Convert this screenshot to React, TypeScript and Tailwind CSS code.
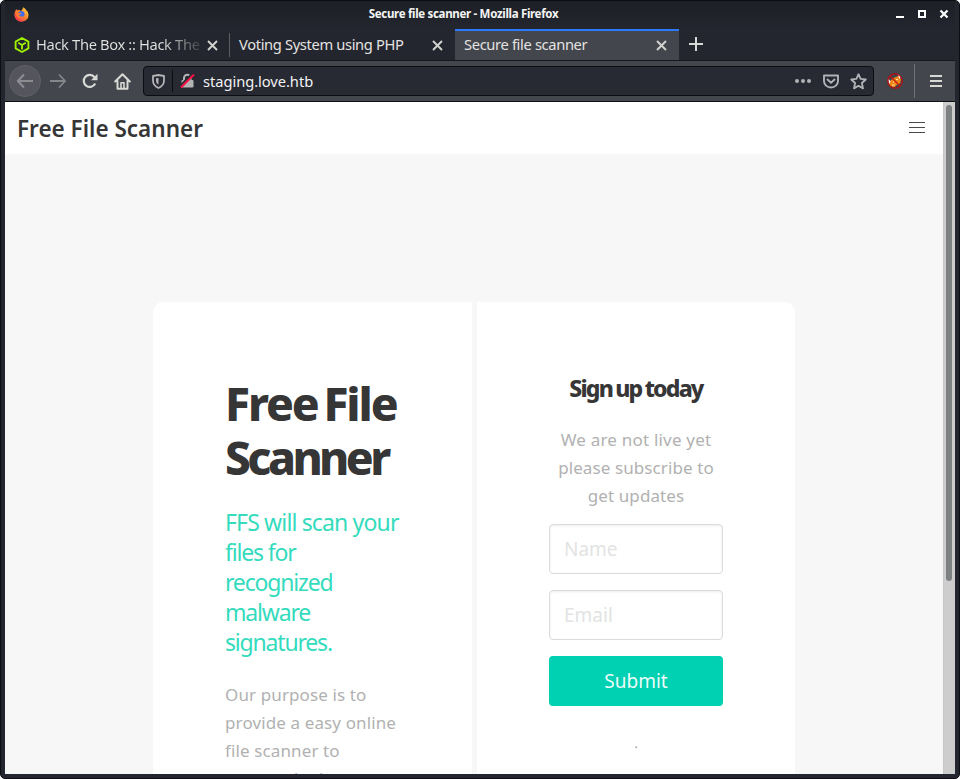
import type { ReactNode } from "react";

function FirefoxLogo() {
  return (
    <svg width="15" height="15" viewBox="0 0 16 16">
      <defs>
        <linearGradient id="fx" x1="1" y1="0" x2="0.2" y2="1">
          <stop offset="0" stopColor="#ffe14a" />
          <stop offset="0.5" stopColor="#ff8a2b" />
          <stop offset="1" stopColor="#f02f55" />
        </linearGradient>
      </defs>
      <path d="M1 5 2.4 2.2l1 1.5L5.4 3l1.8 1.2L9 2.6 9.6.3c2 1 3 2 3.600 3.400l1.300 1C16 8 15.800 11 13.600 13.400 10.500 16.500 5.500 16.300 2.500 13.500.2 11 0 8 1 5Z" fill="url(#fx)" />
      <circle cx="7.700" cy="7.800" r="3.500" fill="#3c6df0" />
      <path d="M2 5c2 2 3 1 5 1l1 1.200-2.500 1.300c.5 2 3.500 2.200 5 .5-.5 3-5 4-7 1.500C2.300 9 1.800 7 2 5Z" fill="#ff7a30" />
    </svg>
  );
}

function BoxLogo() {
  return (
    <svg width="16" height="16" viewBox="0 0 16 16" fill="none" stroke="#9fef00" strokeWidth="1.900" strokeLinejoin="round">
      <path d="M8 1 14.400 4.600v6.800L8 15 1.600 11.400V4.600ZM4.200 5.800 8 8l3.800-2.200M8 8v4.500" />
    </svg>
  );
}

function CloseIcon() {
  return (
    <svg width="11" height="11" viewBox="0 0 11 11" stroke="#d3d3ce" strokeWidth="1.900" className="shrink-0">
      <path d="M1 1l9 9M10 1l-9 9" />
    </svg>
  );
}

function Tab({ children, icon, active = false, fade = false }: { children: ReactNode; icon?: ReactNode; active?: boolean; fade?: boolean }) {
  return (
    <div
      className={
        active
          ? "flex h-8 w-[224px] items-center border-t-2 border-[#2a7afa] bg-[#43464d] pr-[12px] pb-[2px] pl-[9px]"
          : "flex h-8 w-[225px] items-center pr-[12px] pl-[9px]"
      }
    >
      {icon && <span className="mr-[6px] shrink-0">{icon}</span>}
      <span
        className={
          fade
            ? "flex-1 bg-linear-to-r from-[#e3e3e1] from-75% to-[#e3e3e1]/10 bg-clip-text pb-px tracking-[-0.350px] whitespace-nowrap text-transparent"
            : "flex-1 pb-px tracking-[-0.350px] whitespace-nowrap"
        }
      >
        {children}
      </span>
      <span className={fade ? "ml-[4px]" : ""}>
        <CloseIcon />
      </span>
    </div>
  );
}

function TitleBar() {
  return (
    <div className="flex h-[28px] shrink-0 items-center bg-linear-to-b from-[#1d1f26] to-[#23262e] pr-[6px] pb-[2px] pl-[9px]">
      <div className="w-[54px]">
        <FirefoxLogo />
      </div>
      <div className="flex-1 pr-[36px] text-center text-[11.5px] font-bold tracking-[-0.310px] text-[#f4f4f4]">
        Secure file scanner - Mozilla Firefox
      </div>
      <svg width="54" height="10" viewBox="0 0 54 10" fill="none" stroke="#fff">
        <path d="M1 8h8" strokeWidth="2" />
        <rect x="24" y="2" width="6" height="6" strokeWidth="2" />
        <path d="M45.500 1.500l7 7M52.500 1.500l-7 7" strokeWidth="2.200" />
      </svg>
    </div>
  );
}

function Toolbar() {
  return (
    <div className="flex h-[42px] shrink-0 items-center border-t border-b border-t-[#15161b] border-b-[#0e0f13] bg-[#43464d]">
      <div className="ml-1 flex size-8 items-center justify-center rounded-full border border-[#606069] bg-[#55555e]">
        <svg width="18" height="16" viewBox="0 0 18 16" fill="none" stroke="#8d8d91" strokeWidth="2">
          <path d="M17 8H2M8 1.500 1.800 8 8 14.500" strokeLinejoin="round" />
        </svg>
      </div>
      <svg className="ml-[9px]" width="17" height="16" viewBox="0 0 17 16" fill="none" stroke="#85868a" strokeWidth="1.800">
        <path d="M0 8h15M9 1.500 15.200 8 9 14.500" strokeLinejoin="round" />
      </svg>
      <svg className="ml-[15px]" width="16" height="16" viewBox="0 0 16 16" fill="none" stroke="#d8d8d4" strokeWidth="2.200">
        <path d="M13.200 10.500A6 6 0 1 1 12.500 4.200" />
        <path d="M15.500.8v6.400H9Z" fill="#d8d8d4" stroke="none" />
      </svg>
      <svg className="ml-[16px]" width="17" height="17" viewBox="0 0 17 17" fill="none" stroke="#d8d8d4" strokeWidth="2" strokeLinejoin="round" strokeLinecap="round">
        <path d="M1.200 8.500 8.500 1.300l7.300 7.200M3.500 8v7.700h10V8" />
        <path d="M7 15.500V9.800h3v5.700" strokeWidth="1.600" />
      </svg>
      <div className="ml-[12px] flex h-[30px] w-[731px] items-center rounded border border-[#0c0d12] bg-[#272933] pr-[6px] pl-[8px]">
        <svg width="13" height="15" viewBox="0 0 13 15" fill="none" stroke="#b4b4b6" strokeWidth="1.800">
          <path d="M6.500 1 12 2v4.500c0 3.500-2 6-5.500 7.500C3 12.500 1 10 1 6.500V2Z" strokeLinejoin="round" />
          <path d="M6.500 4v6.800C4.700 9.500 4 8.500 4 6.500V4.300Z" fill="#b4b4b6" stroke="none" />
        </svg>
        <span className="ml-[7px] h-[22px] w-px bg-[#0c0d12]" />
        <svg className="ml-[7px]" width="15" height="16" viewBox="0 0 15 16" fill="none">
          <path d="M4 7.500V5a3.300 3.300 0 0 1 6.600 0v2.500" stroke="#b4b4b6" strokeWidth="2" />
          <rect x="1.500" y="7" width="12" height="7.500" rx="1" fill="#b4b4b6" />
          <path d="M0 13 12.800.2" stroke="#272933" strokeWidth="2" />
          <path d="M1 14.500 14 1.500" stroke="#ff1045" strokeWidth="2" />
        </svg>
        <span className="ml-[8px] flex-1 text-[14.700px] tracking-[-0.050px] text-[#f2f2f2]">staging.love.htb</span>
        <svg width="16" height="4" viewBox="0 0 16 4" fill="#b1b2b6">
          <circle cx="2" cy="2" r="2" />
          <circle cx="8" cy="2" r="2" />
          <circle cx="14" cy="2" r="2" />
        </svg>
        <svg className="ml-[12px]" width="16" height="15" viewBox="0 0 16 15" fill="none" stroke="#b1b2b6" strokeWidth="1.900" strokeLinejoin="round">
          <path d="M1 1.500h14V7a7 6.500 0 0 1-14 0Z" />
          <path d="M4.500 5.500 8 8.700l3.500-3.200" strokeLinecap="round" />
        </svg>
        <svg className="ml-[11px]" width="17" height="17" viewBox="0 0 17 17" fill="none" stroke="#b1b2b6" strokeWidth="1.800" strokeLinejoin="round">
          <path d="m8.500 1.200 2.100 4.700 5.200.6-3.900 3.500 1.100 5.400-4.500-2.600L4 15.400 5.100 10 1.200 6.500l5.200-.6Z" />
        </svg>
      </div>
      <svg className="ml-[13px]" width="16" height="16" viewBox="0 0 16 16">
        <path d="M2 10.500C2.500 7 5 7 6.500 5l5-2L14 6.500l-1 4L9.500 12 7 14.500 3.500 13Z" fill="#ef8619" />
        <path d="M.8 4.500 3.500 8.500 2 11ZM10.500.8l3.500 2.500L12.500 6Z" fill="#fff" />
        <path d="M5 12h3M9 6.500h2M6 9h1" stroke="#ffe09a" />
        <circle cx="8" cy="8" r="7.200" fill="none" stroke="#bd0a10" strokeWidth="1.200" />
        <path d="m3 3 10 10" stroke="#c01510" strokeWidth="1.200" />
      </svg>
      <span className="ml-[11px] h-[34px] w-px bg-[#6f7176]" />
      <svg className="ml-[15px]" width="12" height="12" viewBox="0 0 12 12" stroke="#d8d8d4" strokeWidth="2">
        <path d="M0 1h12M0 6h12M0 11h12" />
      </svg>
    </div>
  );
}

function Field({ label }: { label: string }) {
  return (
    <input
      placeholder={label}
      className="mb-4 block h-[50px] w-full rounded border border-[#dbdbdb] bg-white px-[14px] text-[19px] shadow-[inset_0_1px_3px_rgba(10,10,10,0.07)] placeholder:text-[#e3e3e3]"
    />
  );
}

function Page() {
  return (
    <div className="flex min-h-0 flex-1">
      <div className="flex min-w-0 flex-1 flex-col overflow-hidden bg-[#f7f7f7]">
        <header className="flex h-[52px] shrink-0 items-center justify-between bg-white pr-[18px] pl-[12px]">
          <span className="pt-[2px] text-[22.500px] font-semibold text-[#363636]">Free File Scanner</span>
          <span className="mb-px flex w-4 flex-col gap-[4px]">
            <i className="h-px bg-[#4a4a4a]" />
            <i className="h-px bg-[#4a4a4a]" />
            <i className="h-px bg-[#4a4a4a]" />
          </span>
        </header>
        <main className="mt-[148px] ml-[148px] flex shrink-0 gap-[5px]">
          <section className="h-[600px] w-[319px] rounded-tl-[10px] bg-white pt-[74px] pl-[72px]">
            <h1 className="text-[46px] leading-[54px] font-extrabold text-[#363636]">
              <span className="tracking-[-2.100px] [word-spacing:-4px]">Free File</span>
              <br />
              <span className="tracking-[-3.600px]">Scanner</span>
            </h1>
            <h2 className="mt-[23px] text-[23px] leading-[30px] tracking-[-1.180px] text-[#35dbbd]">
              <span className="tracking-[-0.850px]">FFS will scan your</span>
              <br />
              files for
              <br />
              recognized
              <br />
              malware
              <br />
              signatures.
            </h2>
            <p className="mt-[24px] text-[17px] leading-[28px] tracking-[0.120px] text-[#b1b1b1]">
              Our purpose is to
              <br />
              provide a easy online
              <br />
              file scanner to
              <br />
              protect the internet
            </p>
          </section>
          <section className="h-[600px] w-[318px] rounded-tr-[10px] bg-white px-[72px] pt-[71px] text-center">
            <h3 className="text-[23px] leading-[30px] font-extrabold tracking-[-1.800px] whitespace-nowrap text-[#363636] [word-spacing:-1px]">
              Sign up today
            </h3>
            <p className="mt-[23px] mb-[14px] text-[17px] leading-[28px] tracking-[0.100px] whitespace-nowrap text-[#b1b1b1]">
              <span className="tracking-[0.200px]">We are not live yet</span>
              <br />
              please subscribe to
              <br />
              get updates
            </p>
            <Field label="Name" />
            <Field label="Email" />
            <button className="block h-[50px] w-full rounded bg-[#00d1b2] text-[19px] text-white/95">Submit</button>
            <p className="mt-[28px] text-[12px] leading-[20px] text-[#8a8a9a]">.</p>
          </section>
        </main>
      </div>
      <div className="w-3 border-l border-[#c4c7c4] bg-[#cdcdcd] pt-[3px] pl-[2px]">
        <div className="h-[476px] w-[6px] rounded-full bg-[#7d8182]" />
      </div>
    </div>
  );
}

export default function App() {
  return (
    <div className="h-[779px] w-[960px] overflow-hidden bg-white font-['Noto_Sans',sans-serif]">
      <div className="flex h-full flex-col overflow-hidden rounded-[5px] border border-[#0d0e13] bg-[#23262e] px-1 pb-1">
        <TitleBar />
        <div className="flex h-[31px] shrink-0 items-start text-[14.700px] text-[#e3e3e1]">
          <Tab icon={<BoxLogo />} fade>
            Hack The Box :: Hack The
          </Tab>
          <span className="mt-[4px] -ml-px h-6 w-px bg-[#5b5d63]" />
          <Tab>Voting System using PHP</Tab>
          <Tab active>Secure file scanner</Tab>
          <svg className="mt-[8px] ml-[10px]" width="14" height="14" viewBox="0 0 14 14" stroke="#d8d8d4" strokeWidth="2">
            <path d="M7 0v14M0 7h14" />
          </svg>
        </div>
        <Toolbar />
        <Page />
      </div>
    </div>
  );
}
